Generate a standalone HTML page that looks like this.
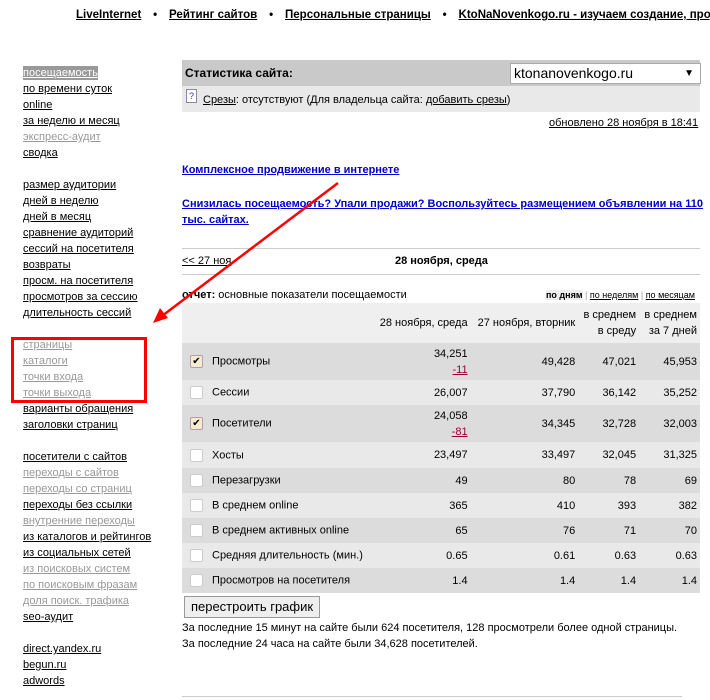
<!DOCTYPE html>
<html><head><meta charset="utf-8"><style>
body{margin:0;width:710px;height:700px;overflow:hidden;background:#fff;font-family:"Liberation Sans",Arial,sans-serif;font-size:11px;color:#000;position:relative}
a{color:#000;text-decoration:underline}
.a{position:absolute;white-space:nowrap}
.nav div{position:absolute;left:23px;line-height:14px;text-decoration:underline;white-space:nowrap}
.g{color:#999}
.top{position:absolute;top:7px;left:76px;font-size:12px;font-weight:bold;white-space:nowrap;transform:scaleX(0.96);transform-origin:0 0}
.top a{margin-right:9px}
.top span{margin-right:9px}
table{position:absolute;left:182px;top:303px;width:518px;border-collapse:collapse;font-size:11px}
td{padding:0 3px;text-align:right;white-space:nowrap}
td.l{text-align:left;padding-left:0}
.cb{display:inline-block;width:11px;height:11px;border:1px solid #ccc;background:#fff;border-radius:2px;vertical-align:middle;margin:0 9px 0 8px;font-size:10px;line-height:11px;text-align:center}
.cb.c{background:#f5ecd0;border-color:#b9a}
.d{background:#dcdcdc}.w{background:#e9e9e9}
</style></head><body>
<div style="position:absolute;left:0;top:0;width:710px;height:30px;overflow:hidden"><div class="top"><a>LiveInternet</a> <span>•</span> <a>Рейтинг сайтов</a> <span>•</span> <a>Персональные страницы</a> <span>•</span> <a>KtoNaNovenkogo.ru - изучаем создание, продвижение</a></div></div>

<div class="nav">
<div style="top:66px;background:#999;color:#fff">посещаемость</div>
<div style="top:82px">по времени суток</div>
<div style="top:98px">online</div>
<div style="top:114px">за неделю и месяц</div>
<div style="top:130px" class="g">экспресс-аудит</div>
<div style="top:146px">сводка</div>
<div style="top:178px">размер аудитории</div>
<div style="top:194px">дней в неделю</div>
<div style="top:210px">дней в месяц</div>
<div style="top:226px">сравнение аудиторий</div>
<div style="top:242px">сессий на посетителя</div>
<div style="top:258px">возвраты</div>
<div style="top:274px">просм. на посетителя</div>
<div style="top:290px">просмотров за сессию</div>
<div style="top:306px">длительность сессий</div>
<div style="top:338px" class="g">страницы</div>
<div style="top:354px" class="g">каталоги</div>
<div style="top:370px" class="g">точки входа</div>
<div style="top:386px" class="g">точки выхода</div>
<div style="top:402px">варианты обращения</div>
<div style="top:418px">заголовки страниц</div>
<div style="top:450px">посетители с сайтов</div>
<div style="top:466px" class="g">переходы с сайтов</div>
<div style="top:482px" class="g">переходы со страниц</div>
<div style="top:498px">переходы без ссылки</div>
<div style="top:514px" class="g">внутренние переходы</div>
<div style="top:530px">из каталогов и рейтингов</div>
<div style="top:546px">из социальных сетей</div>
<div style="top:562px" class="g">из поисковых систем</div>
<div style="top:578px" class="g">по поисковым фразам</div>
<div style="top:594px" class="g">доля поиск. трафика</div>
<div style="top:610px">seo-аудит</div>
<div style="top:642px">direct.yandex.ru</div>
<div style="top:658px">begun.ru</div>
<div style="top:674px">adwords</div>
</div>
<div class="a" style="left:11px;top:337px;width:130px;height:60px;border:3px solid #f00"></div>

<div class="a" style="left:182px;top:60px;width:518px;height:26px;background:#c9c9c9"></div>
<div class="a" style="left:185px;top:66px;font-size:12px;font-weight:bold">Статистика сайта:</div>
<div class="a" style="left:510px;top:63px;width:186px;height:19px;background:#fff;border:1px solid #aaa;font-size:14px;line-height:19px;padding-left:3px">ktonanovenkogo.ru<span style="position:absolute;right:6px;font-size:10px">▼</span></div>
<div class="a" style="left:182px;top:86px;width:518px;height:26px;background:#e9e9e9"></div>
<div class="a" style="left:186px;top:89px;width:9px;height:12px;border:1px solid #88a;background:#fff;font-size:9px;line-height:12px;text-align:center;color:#33a">?</div>
<div class="a" style="left:203px;top:94px"><a>Срезы</a>: отсутствуют (Для владельца сайта: <a>добавить срезы</a>)</div>
<div class="a" style="left:549px;top:117px"><a>обновлено 28 ноября в 18:41</a></div>

<div class="a" style="left:182px;top:164px;font-weight:bold;color:#00c"><a style="color:#00c">Комплексное продвижение в интернете</a></div>
<div class="a" style="left:182px;top:196px;width:525px;white-space:normal;line-height:16px;font-weight:bold"><a style="color:#00c">Снизилась посещаемость? Упали продажи? Воспользуйтесь размещением объявлении на 110 тыс. сайтах.</a></div>

<div class="a" style="left:182px;top:248px;width:518px;height:1px;background:#ccc"></div>
<div class="a" style="left:182px;top:255px"><a>&lt;&lt; 27 ноя</a></div>
<div class="a" style="left:395px;top:255px;font-weight:bold">28 ноября, среда</div>
<div class="a" style="left:182px;top:274px;width:518px;height:1px;background:#ccc"></div>

<div class="a" style="left:182px;top:289px"><b>отчет:</b> основные показатели посещаемости</div>
<div class="a" style="left:546px;top:290px;font-size:9px"><b style="background:#eee">по дням</b> <span style="color:#999">|</span> <a>по неделям</a> <span style="color:#999">|</span> <a>по месяцам</a></div>

<table>
<tr style="background:#efefef;height:40px"><td class="l"></td><td style="vertical-align:middle">28 ноября, среда</td><td>27 ноября, вторник</td><td style="line-height:16px">в среднем<br>в среду</td><td style="line-height:16px">в среднем<br>за 7 дней</td></tr>
<tr class="d" style="height:37px"><td class="l"><span class="cb c">✔</span>Просмотры</td><td style="line-height:16px">34,251<br><a style="color:#903">-11</a></td><td>49,428</td><td>47,021</td><td>45,953</td></tr>
<tr class="w" style="height:25px"><td class="l"><span class="cb"></span>Сессии</td><td>26,007</td><td>37,790</td><td>36,142</td><td>35,252</td></tr>
<tr class="d" style="height:37px"><td class="l"><span class="cb c">✔</span>Посетители</td><td style="line-height:16px">24,058<br><a style="color:#903">-81</a></td><td>34,345</td><td>32,728</td><td>32,003</td></tr>
<tr class="w" style="height:26px"><td class="l"><span class="cb"></span>Хосты</td><td>23,497</td><td>33,497</td><td>32,045</td><td>31,325</td></tr>
<tr class="d" style="height:25px"><td class="l"><span class="cb"></span>Перезагрузки</td><td>49</td><td>80</td><td>78</td><td>69</td></tr>
<tr class="w" style="height:25px"><td class="l"><span class="cb"></span>В среднем online</td><td>365</td><td>410</td><td>393</td><td>382</td></tr>
<tr class="d" style="height:25px"><td class="l"><span class="cb"></span>В среднем активных online</td><td>65</td><td>76</td><td>71</td><td>70</td></tr>
<tr class="w" style="height:25px"><td class="l"><span class="cb"></span>Средняя длительность (мин.)</td><td>0.65</td><td>0.61</td><td>0.63</td><td>0.63</td></tr>
<tr class="d" style="height:25px"><td class="l"><span class="cb"></span>Просмотров на посетителя</td><td>1.4</td><td>1.4</td><td>1.4</td><td>1.4</td></tr>
</table>

<div class="a" style="left:184px;top:596px;width:134px;height:20px;border:1px solid #999;background:#eee;font-size:13px;line-height:20px;text-align:center">перестроить график</div>
<div class="a" style="left:182px;top:622px">За последние 15 минут на сайте были 624 посетителя, 128 просмотрели более одной страницы.</div>
<div class="a" style="left:182px;top:638px">За последние 24 часа на сайте были 34,628 посетителей.</div>
<div class="a" style="left:182px;top:696px;width:500px;height:1px;background:#ccc"></div>

<svg class="a" style="left:0;top:0" width="710" height="700"><line x1="338" y1="183" x2="162" y2="316" stroke="#f00" stroke-width="2.5"/><polygon points="153,323 160,308 168,318" fill="#f00"/></svg>
</body></html>
